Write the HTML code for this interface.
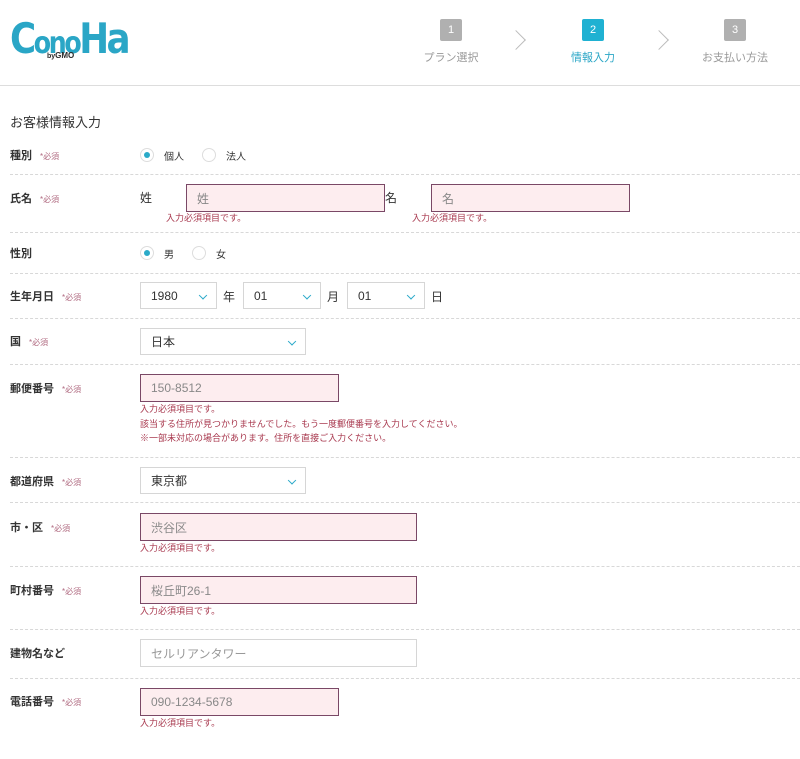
<!DOCTYPE html>
<html><head><meta charset="utf-8"><style>
*{margin:0;padding:0;box-sizing:border-box}
body{width:800px;height:759px;background:#fff;position:relative;overflow:hidden;font-family:"Liberation Sans","Noto Sans CJK JP",sans-serif;color:#333}
.a{position:absolute;white-space:nowrap}
.lbl{font-size:11px;font-weight:bold;color:#333;left:10px}
.req{font-size:8px;color:#b06a80;font-weight:normal;margin-left:8px}
.dash{position:absolute;left:10px;right:0;height:0;border-top:1px dashed #d8d8d8}
.in{position:absolute;background:#fdedef;border:1.5px solid #7a4866;font-size:12px;color:#888;padding-left:10px;display:flex;align-items:center}
.wh{background:#fff;border:1px solid #d6d6d6;color:#999}
.sel{position:absolute;background:#fff;border:1px solid #d6d6d6;font-size:12px;color:#333;padding-left:10px;display:flex;align-items:center}
.sel:after{content:"";position:absolute;right:10px;top:50%;width:5px;height:5px;border-right:1.5px solid #2aa9c9;border-bottom:1.5px solid #2aa9c9;transform:translateY(-60%) rotate(45deg)}
.err{font-size:9px;color:#a8384e;line-height:14.5px}
.t{font-size:11px;color:#333}
.rad{position:absolute;width:14px;height:14px;border-radius:50%;border:1px solid #ddd;background:#fff}
.rad.on:after{content:"";position:absolute;left:3px;top:3px;width:6px;height:6px;border-radius:50%;background:#2aaac8}
.step{position:absolute;width:22px;height:22px;border-radius:2px;color:#fff;font-size:11px;text-align:center;line-height:22px;background:#b0b0b0}
.sl{position:absolute;font-size:11px;color:#999;transform:translateX(-50%);white-space:nowrap}
.chev{position:absolute;width:14px;height:14px;border-right:1px solid #bbb;border-top:1px solid #bbb;transform:rotate(45deg)}
</style></head><body>
<div class="a" style="left:10px;top:14px;font-size:42px;font-weight:bold;color:#2aa6c6;letter-spacing:-3px;font-family:'DejaVu Sans',sans-serif;transform:scaleX(0.85);transform-origin:left">C<span style="font-size:30px">ono</span>Ha</div>
<div class="a" style="left:47px;top:51px;font-size:7px;font-weight:bold;color:#2a2a2a">by<span style="font-size:8px">GMO</span></div>

<div class="step" style="left:440px;top:19px">1</div>
<div class="sl" style="left:451px;top:49px">プラン選択</div>
<div class="chev" style="left:509px;top:33px"></div>
<div class="step" style="left:582px;top:19px;background:#1fb1d2">2</div>
<div class="sl" style="left:593px;top:49px;color:#2aa6c6">情報入力</div>
<div class="chev" style="left:652px;top:33px"></div>
<div class="step" style="left:724px;top:19px">3</div>
<div class="sl" style="left:735px;top:49px">お支払い方法</div>
<div class="a" style="left:0;right:0;top:85px;border-top:1px solid #ddd"></div>

<div class="a" style="left:10px;top:112px;font-size:13px;color:#333">お客様情報入力</div>

<div class="a lbl" style="top:147px">種別<span class="req">*必須</span></div>
<div class="rad on" style="left:140px;top:148px"></div><div class="a t" style="left:164px;top:148px;font-size:10px">個人</div>
<div class="rad" style="left:202px;top:148px"></div><div class="a t" style="left:226px;top:148px;font-size:10px">法人</div>
<div class="dash" style="top:174px"></div>

<div class="a lbl" style="top:190px">氏名<span class="req">*必須</span></div>
<div class="a t" style="left:140px;top:189px;font-size:12px">姓</div>
<div class="in" style="left:186px;top:184px;width:199px;height:28px">姓</div>
<div class="a err" style="left:166px;top:211px">入力必須項目です。</div>
<div class="a t" style="left:385px;top:189px;font-size:12px">名</div>
<div class="in" style="left:431px;top:184px;width:199px;height:28px">名</div>
<div class="a err" style="left:412px;top:211px">入力必須項目です。</div>
<div class="dash" style="top:232px"></div>

<div class="a lbl" style="top:245px">性別</div>
<div class="rad on" style="left:140px;top:246px"></div><div class="a t" style="left:164px;top:246px;font-size:10px">男</div>
<div class="rad" style="left:192px;top:246px"></div><div class="a t" style="left:216px;top:246px;font-size:10px">女</div>
<div class="dash" style="top:273px"></div>

<div class="a lbl" style="top:288px">生年月日<span class="req">*必須</span></div>
<div class="sel" style="left:140px;top:282px;width:77px;height:27px">1980</div>
<div class="a t" style="left:223px;top:288px;font-size:12px">年</div>
<div class="sel" style="left:243px;top:282px;width:78px;height:27px">01</div>
<div class="a t" style="left:327px;top:288px;font-size:12px">月</div>
<div class="sel" style="left:347px;top:282px;width:78px;height:27px">01</div>
<div class="a t" style="left:431px;top:288px;font-size:12px">日</div>
<div class="dash" style="top:318px"></div>

<div class="a lbl" style="top:333px">国<span class="req">*必須</span></div>
<div class="sel" style="left:140px;top:328px;width:166px;height:27px">日本</div>
<div class="dash" style="top:364px"></div>

<div class="a lbl" style="top:380px">郵便番号<span class="req">*必須</span></div>
<div class="in" style="left:140px;top:374px;width:199px;height:28px">150-8512</div>
<div class="a err" style="left:140px;top:402px">入力必須項目です。<br>該当する住所が見つかりませんでした。もう一度郵便番号を入力してください。<br>※一部未対応の場合があります。住所を直接ご入力ください。</div>
<div class="dash" style="top:457px"></div>

<div class="a lbl" style="top:473px">都道府県<span class="req">*必須</span></div>
<div class="sel" style="left:140px;top:467px;width:166px;height:27px">東京都</div>
<div class="dash" style="top:502px"></div>

<div class="a lbl" style="top:519px">市・区<span class="req">*必須</span></div>
<div class="in" style="left:140px;top:513px;width:277px;height:28px">渋谷区</div>
<div class="a err" style="left:140px;top:541px">入力必須項目です。</div>
<div class="dash" style="top:566px"></div>

<div class="a lbl" style="top:582px">町村番号<span class="req">*必須</span></div>
<div class="in" style="left:140px;top:576px;width:277px;height:28px">桜丘町26-1</div>
<div class="a err" style="left:140px;top:604px">入力必須項目です。</div>
<div class="dash" style="top:629px"></div>

<div class="a lbl" style="top:645px">建物名など</div>
<div class="in wh" style="left:140px;top:639px;width:277px;height:28px">セルリアンタワー</div>
<div class="dash" style="top:678px"></div>

<div class="a lbl" style="top:693px">電話番号<span class="req">*必須</span></div>
<div class="in" style="left:140px;top:688px;width:199px;height:28px">090-1234-5678</div>
<div class="a err" style="left:140px;top:716px">入力必須項目です。</div>
</body></html>
